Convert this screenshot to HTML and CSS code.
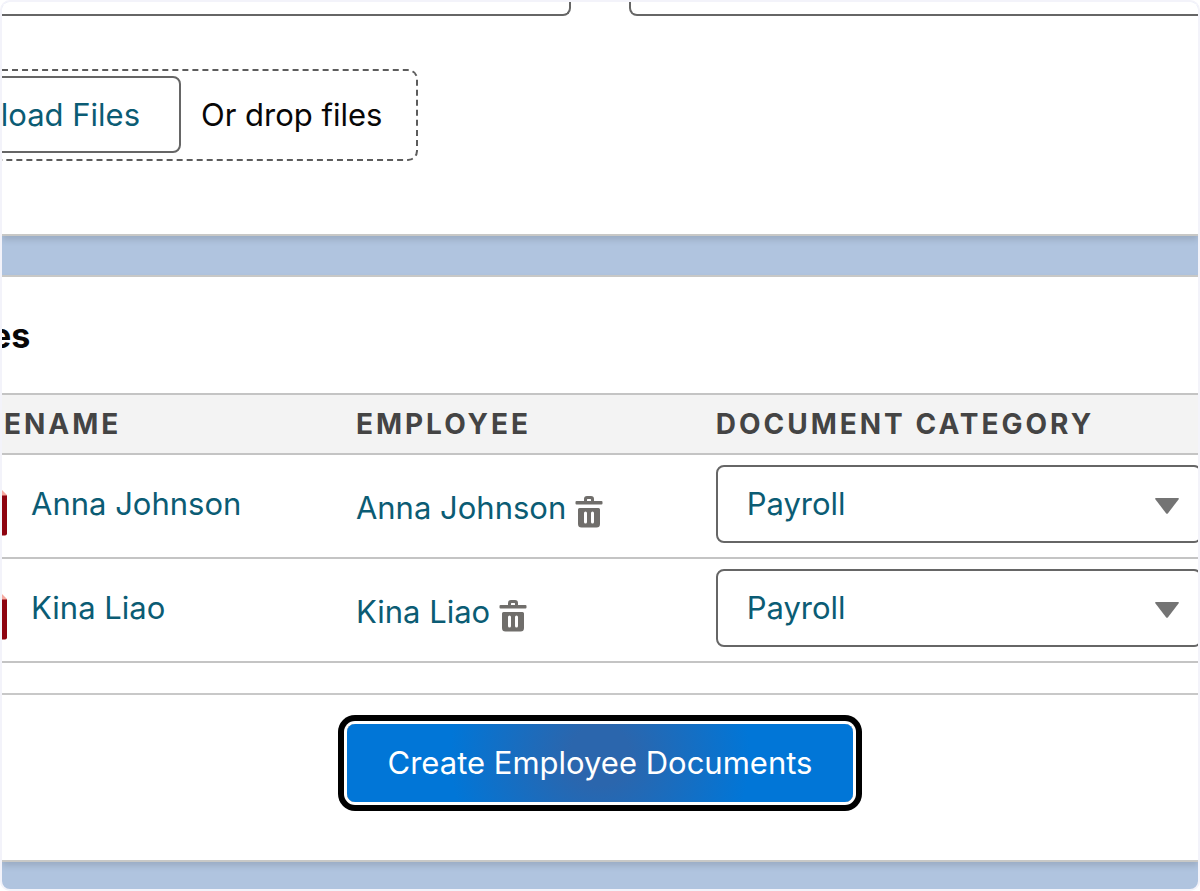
FILE: index.html
```html
<!DOCTYPE html>
<html lang="en">
<head>
    <meta charset="utf-8">
    <title>Create Employee Documents</title>
    <link rel="stylesheet" href="styles.css">
</head>
<body>
    <main class="frame">
        <section class="card upload-card">
            <div class="fields">
                <input class="field" type="text" aria-label="Employee">
                <input class="field" type="text" aria-label="Document type">
            </div>
            <div class="dropzone">
                <button class="upload-btn" type="button">load Files</button>
                <span class="drop-text">Or drop files</span>
            </div>
        </section>

        <section class="card files-card">
            <h2 class="card-title">es</h2>
            <table class="files">
                <thead>
                    <tr>
                        <th class="col-file">ENAME</th>
                        <th class="col-employee">EMPLOYEE</th>
                        <th>DOCUMENT CATEGORY</th>
                    </tr>
                </thead>
                <tbody>
                    <tr>
                        <td class="file-cell">
                            <div class="file">
                                <svg class="pdf-icon" width="5" height="46" viewBox="0 0 5 46"><path d="M0 0L5 5V6H0z" fill="#f5a9a0"/><path d="M0 5.500H5V43.500Q5 45.500 3 45.500H0z" fill="#8e030f"/></svg>
                                <a href="#">Anna Johnson</a>
                            </div>
                        </td>
                        <td>
                            <div class="employee">
                                <a href="#">Anna Johnson</a>
                                <button class="delete-btn" type="button" aria-label="Remove Anna Johnson">
                                    <svg width="28" height="32" viewBox="0 0 28 32" fill="#706e6b"><path fill-rule="evenodd" d="M1.500 5H9V3Q9 0 12 0H16Q19 0 19 3V5H26.500Q27.500 5 27.500 6V7.500Q27.500 8.500 26.500 8.500H1.500Q.5 8.500 .5 7.500V6Q.5 5 1.500 5zM12 5H16V3.500Q16 3 15.500 3H12.500Q12 3 12 3.500z"/><path fill-rule="evenodd" d="M4.500 12H23.500Q25 12 25 13.500V28Q25 31.500 21.500 31.500H6.500Q3 31.500 3 28V13.500Q3 12 4.500 12zM9 17V26Q9 27.500 10.500 27.500T12 26V17Q12 15.500 10.500 15.500T9 17zM16 17V26Q16 27.500 17.500 27.500T19 26V17Q19 15.500 17.500 15.500T16 17z"/></svg>
                                </button>
                            </div>
                        </td>
                        <td class="category-cell">
                            <div class="category">
                                <select aria-label="Document category for Anna Johnson">
                                    <option>Payroll</option>
                                </select>
                                <svg class="arrow" width="24" height="16" viewBox="0 0 24 16"><path d="M1 0H23Q24.500 0 23.500 1.500L13 15.200Q12 16.200 11 15.200L.5 1.500Q-.5 0 1 0z" fill="#747474"/></svg>
                            </div>
                        </td>
                    </tr>
                    <tr>
                        <td class="file-cell">
                            <div class="file">
                                <svg class="pdf-icon" width="5" height="46" viewBox="0 0 5 46"><path d="M0 0L5 5V6H0z" fill="#f5a9a0"/><path d="M0 5.500H5V43.500Q5 45.500 3 45.500H0z" fill="#8e030f"/></svg>
                                <a href="#">Kina Liao</a>
                            </div>
                        </td>
                        <td>
                            <div class="employee">
                                <a href="#">Kina Liao</a>
                                <button class="delete-btn" type="button" aria-label="Remove Kina Liao">
                                    <svg width="28" height="32" viewBox="0 0 28 32" fill="#706e6b"><path fill-rule="evenodd" d="M1.500 5H9V3Q9 0 12 0H16Q19 0 19 3V5H26.500Q27.500 5 27.500 6V7.500Q27.500 8.500 26.500 8.500H1.500Q.5 8.500 .5 7.500V6Q.5 5 1.500 5zM12 5H16V3.500Q16 3 15.500 3H12.500Q12 3 12 3.500z"/><path fill-rule="evenodd" d="M4.500 12H23.500Q25 12 25 13.500V28Q25 31.500 21.500 31.500H6.500Q3 31.500 3 28V13.500Q3 12 4.500 12zM9 17V26Q9 27.500 10.500 27.500T12 26V17Q12 15.500 10.500 15.500T9 17zM16 17V26Q16 27.500 17.500 27.500T19 26V17Q19 15.500 17.500 15.500T16 17z"/></svg>
                                </button>
                            </div>
                        </td>
                        <td class="category-cell">
                            <div class="category">
                                <select aria-label="Document category for Kina Liao">
                                    <option>Payroll</option>
                                </select>
                                <svg class="arrow" width="24" height="16" viewBox="0 0 24 16"><path d="M1 0H23Q24.500 0 23.500 1.500L13 15.200Q12 16.200 11 15.200L.5 1.500Q-.5 0 1 0z" fill="#747474"/></svg>
                            </div>
                        </td>
                    </tr>
                </tbody>
            </table>
            <div class="card-footer">
                <button class="create-btn" type="button">Create Employee Documents</button>
            </div>
        </section>
    </main>
</body>
</html>
```
FILE: styles.css
```css
* {
    box-sizing: border-box;
}
body {
    margin: 0;
    background: #fff;
    font-family: Inter, "Liberation Sans", sans-serif;
    font-size: 31px;
    line-height: 40px;
    color: #080707;
}
button, input, select {
    font: inherit;
}
a {
    color: #0b5c74;
    text-decoration: none;
}
.frame {
    min-height: 100vh;
    border: 2px solid #f3f3fa;
    border-radius: 10px;
    background: #b0c4df;
    overflow: hidden;
}
.card {
    background: #fff;
    border-bottom: 2px solid #c8c8c6;
    box-shadow: 0 4px 6px rgba(0, 0, 0, 0.12);
}

/* upload */
.upload-card {
    padding-bottom: 73px;
}
.fields {
    display: grid;
    grid-template-columns: 1fr 1fr;
    gap: 58px;
    margin: 0 -10px;
}
.field {
    height: 14px;
    border: 2px solid #666;
    border-top: none;
    border-radius: 0 0 8px 8px;
    background: #fff;
}
.dropzone {
    display: flex;
    align-items: center;
    gap: 20px;
    width: fit-content;
    margin: 53px 0 0 -10px;
    padding: 5px 34px 6px 0;
    border: 2px dashed #5c5c5c;
    border-radius: 10px;
}
.upload-btn {
    height: 77px;
    padding: 0 39px 0 2px;
    border: 2px solid #666;
    border-radius: 8px;
    background: #fff;
    color: #0b5c74;
    text-align: right;
    min-width: 187px;
}

/* files */
.files-card {
    margin-top: 39px;
    border-top: 2px solid #c8c8c6;
}
.card-title {
    margin: 0 0 0 -11px;
    padding: 39px 0 37px;
    font-size: 34px;
    font-weight: 700;
}
.files {
    width: 100%;
    table-layout: fixed;
    border-spacing: 0;
    border-top: 2px solid #c4c4c4;
}
.files th {
    height: 60px;
    padding: 0 0 0 20px;
    border-bottom: 2px solid #c4c4c4;
    background: #f3f3f3;
    color: #444;
    font-size: 28px;
    font-weight: 700;
    letter-spacing: 3px;
    text-align: left;
    white-space: nowrap;
}
.files td {
    height: 104px;
    padding: 0 0 0 19px;
    border-bottom: 2px solid #c4c4c4;
}
.files .col-file {
    width: 28%;
    padding-left: 2px;
}
.files .col-employee {
    width: 30%;
    padding-left: 19px;
}
.files .file-cell {
    padding-left: 0;
}
.file {
    display: flex;
    gap: 24px;
    padding-bottom: 4px;
}
.pdf-icon {
    margin: 6px 0 -12px;
    flex: none;
}
.employee {
    display: flex;
    align-items: center;
    gap: 9px;
    padding-top: 4px;
}
.delete-btn {
    display: flex;
    padding: 8px 0 0;
    border: none;
    background: none;
}
.files .category-cell {
    padding-left: 20px;
}
.category {
    display: grid;
    align-items: center;
    margin-right: -4px;
    padding-bottom: 4px;
}
.category select {
    grid-area: 1 / 1;
    width: 100%;
    height: 78px;
    padding: 0 29px;
    border: 2px solid #666;
    border-radius: 8px;
    background: #fff;
    color: #0b5c74;
    appearance: none;
}
.arrow {
    grid-area: 1 / 1;
    justify-self: end;
    margin: 4px 23px 0 0;
    pointer-events: none;
}

.card-footer {
    display: flex;
    justify-content: center;
    margin-top: 30px;
    padding: 29px 0 58px;
    border-top: 2px solid #c8c8c8;
}
.create-btn {
    height: 78px;
    padding: 0 41px;
    border: none;
    border-radius: 8px;
    background: radial-gradient(circle at 50% 40%, #2b66ad 0, #2b66ad 30px, #0176d7 150px);
    box-shadow: 0 0 0 3px #fff, 0 0 0 9px #000;
    color: #fff;
}
```
